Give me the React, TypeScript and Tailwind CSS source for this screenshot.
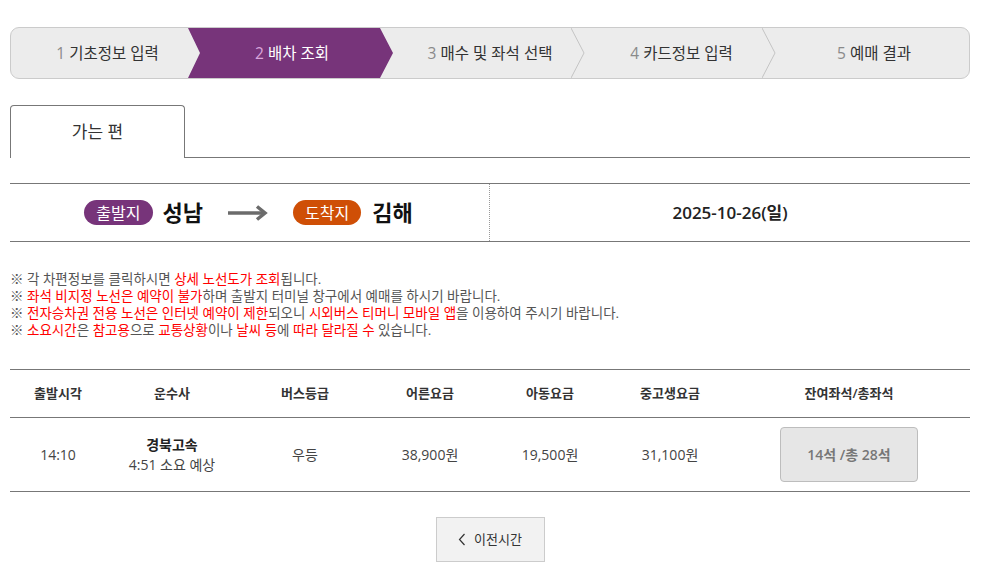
import React from 'react';

const font = { fontFamily: '"Open Sans", "Noto Sans CJK KR", sans-serif' };

const steps = [
    { no: 1, label: '기초정보 입력', w: 'w-[177px] pl-[16px]' },
    { no: 2, label: '배차 조회', w: 'w-[192px] pl-[16px]' },
    { no: 3, label: '매수 및 좌석 선택', w: 'w-[192px] pl-[28px]' },
    { no: 4, label: '카드정보 입력', w: 'w-[191px] pl-[28px]' },
    { no: 5, label: '예매 결과', w: 'flex-1 pl-[16px]' },
];

function Chevron() {
    return (
        <svg className="absolute right-[-13px] top-0 z-10 h-full w-[14px]" viewBox="0 0 14 50" preserveAspectRatio="none">
            <polyline points="0,0 13,25 0,50" fill="none" stroke="#c4c4c4" strokeWidth="1" />
        </svg>
    );
}

function StepBar() {
    return (
        <div className="flex h-[52px] rounded-[9px] border border-[#cbcbcb] bg-[#ececec] overflow-hidden">
            {steps.map((s, i) => {
                const active = s.no === 2;
                return (
                    <div key={s.no} className={`${s.w} relative flex items-center justify-center text-[15.5px]`}>
                        {active && (
                            <div className="absolute inset-y-0 left-0 z-20 w-[calc(100%+13px)] bg-[#77347a] [clip-path:polygon(0_0,calc(100%-13px)_0,100%_50%,calc(100%-13px)_100%,0_100%,12px_50%)]" />
                        )}
                        {!active && i < steps.length - 1 && steps[i + 1].no !== 2 && <Chevron />}
                        <span className="relative z-30 pt-[1px]">
                            <span className={active ? 'text-[#d9a5dc]' : 'text-[#8a8a8a]'}>{s.no}</span>{' '}
                            <span className={active ? 'text-white' : 'text-[#333]'}>{s.label}</span>
                        </span>
                    </div>
                );
            })}
        </div>
    );
}

function Red({ children }: { children: React.ReactNode }) {
    return <span className="text-[#ff0000]">{children}</span>;
}

export default function App() {
    return (
        <div className="w-[1005px] h-[574px] bg-white overflow-hidden" style={font}>
            <div className="w-[960px] ml-[10px] pt-[27px]">
                <StepBar />

                {/* tab */}
                <div className="mt-[26px] flex items-end">
                    <div className="w-[175px] h-[53px] rounded-t-[4px] border border-b-0 border-[#777] flex items-center justify-center text-[17px] text-[#333]">
                        가는 편
                    </div>
                    <div className="flex-1 border-b border-[#777]" />
                </div>

                {/* route */}
                <div className="mt-[25px] flex h-[59px] border-y border-[#777]">
                    <div className="w-[480px] flex items-center justify-center border-r border-dotted border-[#999] pr-[2px]">
                        <span className="rounded-full bg-[#77347a] text-white text-[16px] h-[25px] px-[12px] flex items-center">출발지</span>
                        <span className="ml-[10px] text-[22px] font-bold text-[#111]">성남</span>
                        <svg className="ml-[25px] mr-[24px]" width="41" height="16" viewBox="0 0 41 16">
                            <line x1="0" y1="8" x2="37" y2="8" stroke="#6b6b6b" strokeWidth="3.5" />
                            <polyline points="29,1.5 37,8 29,14.5" fill="none" stroke="#6b6b6b" strokeWidth="3.5" />
                        </svg>
                        <span className="rounded-full bg-[#cf4f06] text-white text-[16px] h-[25px] px-[12px] flex items-center">도착지</span>
                        <span className="ml-[11px] text-[22px] font-bold text-[#111]">김해</span>
                    </div>
                    <div className="flex-1 flex items-center justify-center text-[17px] font-semibold text-[#222]">
                        2025-10-26(일)
                    </div>
                </div>

                {/* notes */}
                <div className="mt-[29px] text-[13.5px] leading-[17px] text-[#555]">
                    <p>※ 각 차편정보를 클릭하시면 <Red>상세 노선도가 조회</Red>됩니다.</p>
                    <p>※ <Red>좌석 비지정 노선은 예약이 불가</Red>하며 출발지 터미널 창구에서 예매를 하시기 바랍니다.</p>
                    <p>※ <Red>전자승차권 전용 노선은 인터넷 예약이 제한</Red>되오니 <Red>시외버스 티머니 모바일 앱</Red>을 이용하여 주시기 바랍니다.</p>
                    <p>※ <Red>소요시간</Red>은 <Red>참고용</Red>으로 <Red>교통상황</Red>이나 <Red>날씨 등</Red>에 <Red>따라 달라질 수</Red> 있습니다.</p>
                </div>

                {/* table */}
                <div className="mt-[30px] border-y border-[#777]">
                    <div className="grid grid-cols-[96px_132px_134px_116px_124px_116px_1fr] h-[48px] items-center text-center text-[13px] font-semibold text-[#333] border-b border-[#777]">
                        <div>출발시각</div>
                        <div>운수사</div>
                        <div>버스등급</div>
                        <div>어른요금</div>
                        <div>아동요금</div>
                        <div>중고생요금</div>
                        <div>잔여좌석/총좌석</div>
                    </div>
                    <div className="grid grid-cols-[96px_132px_134px_116px_124px_116px_1fr] h-[73px] items-center text-center text-[14px] text-[#444]">
                        <div>14:10</div>
                        <div className="leading-[20px]">
                            <div className="font-bold text-[#222] text-[14px]">경북고속</div>
                            <div>4:51 소요 예상</div>
                        </div>
                        <div>우등</div>
                        <div>38,900원</div>
                        <div>19,500원</div>
                        <div>31,100원</div>
                        <div className="flex justify-center">
                            <div className="w-[138px] h-[55px] rounded-[4px] border border-[#bdbdbd] bg-[#e6e6e6] flex items-center justify-center text-[14px] font-semibold text-[#777]">
                                14석 /총 28석
                            </div>
                        </div>
                    </div>
                </div>

                <div className="mt-[25px] flex justify-center">
                    <div className="w-[109px] h-[45px] border border-[#cccccc] bg-[#f2f2f2] flex items-center justify-center gap-[8px] text-[13px] text-[#333]">
                        <svg width="8" height="13" viewBox="0 0 8 13">
                            <polyline points="6.5,1 1.5,6.5 6.5,12" fill="none" stroke="#333" strokeWidth="1.2" />
                        </svg>
                        이전시간
                    </div>
                </div>
            </div>
        </div>
    );
}
